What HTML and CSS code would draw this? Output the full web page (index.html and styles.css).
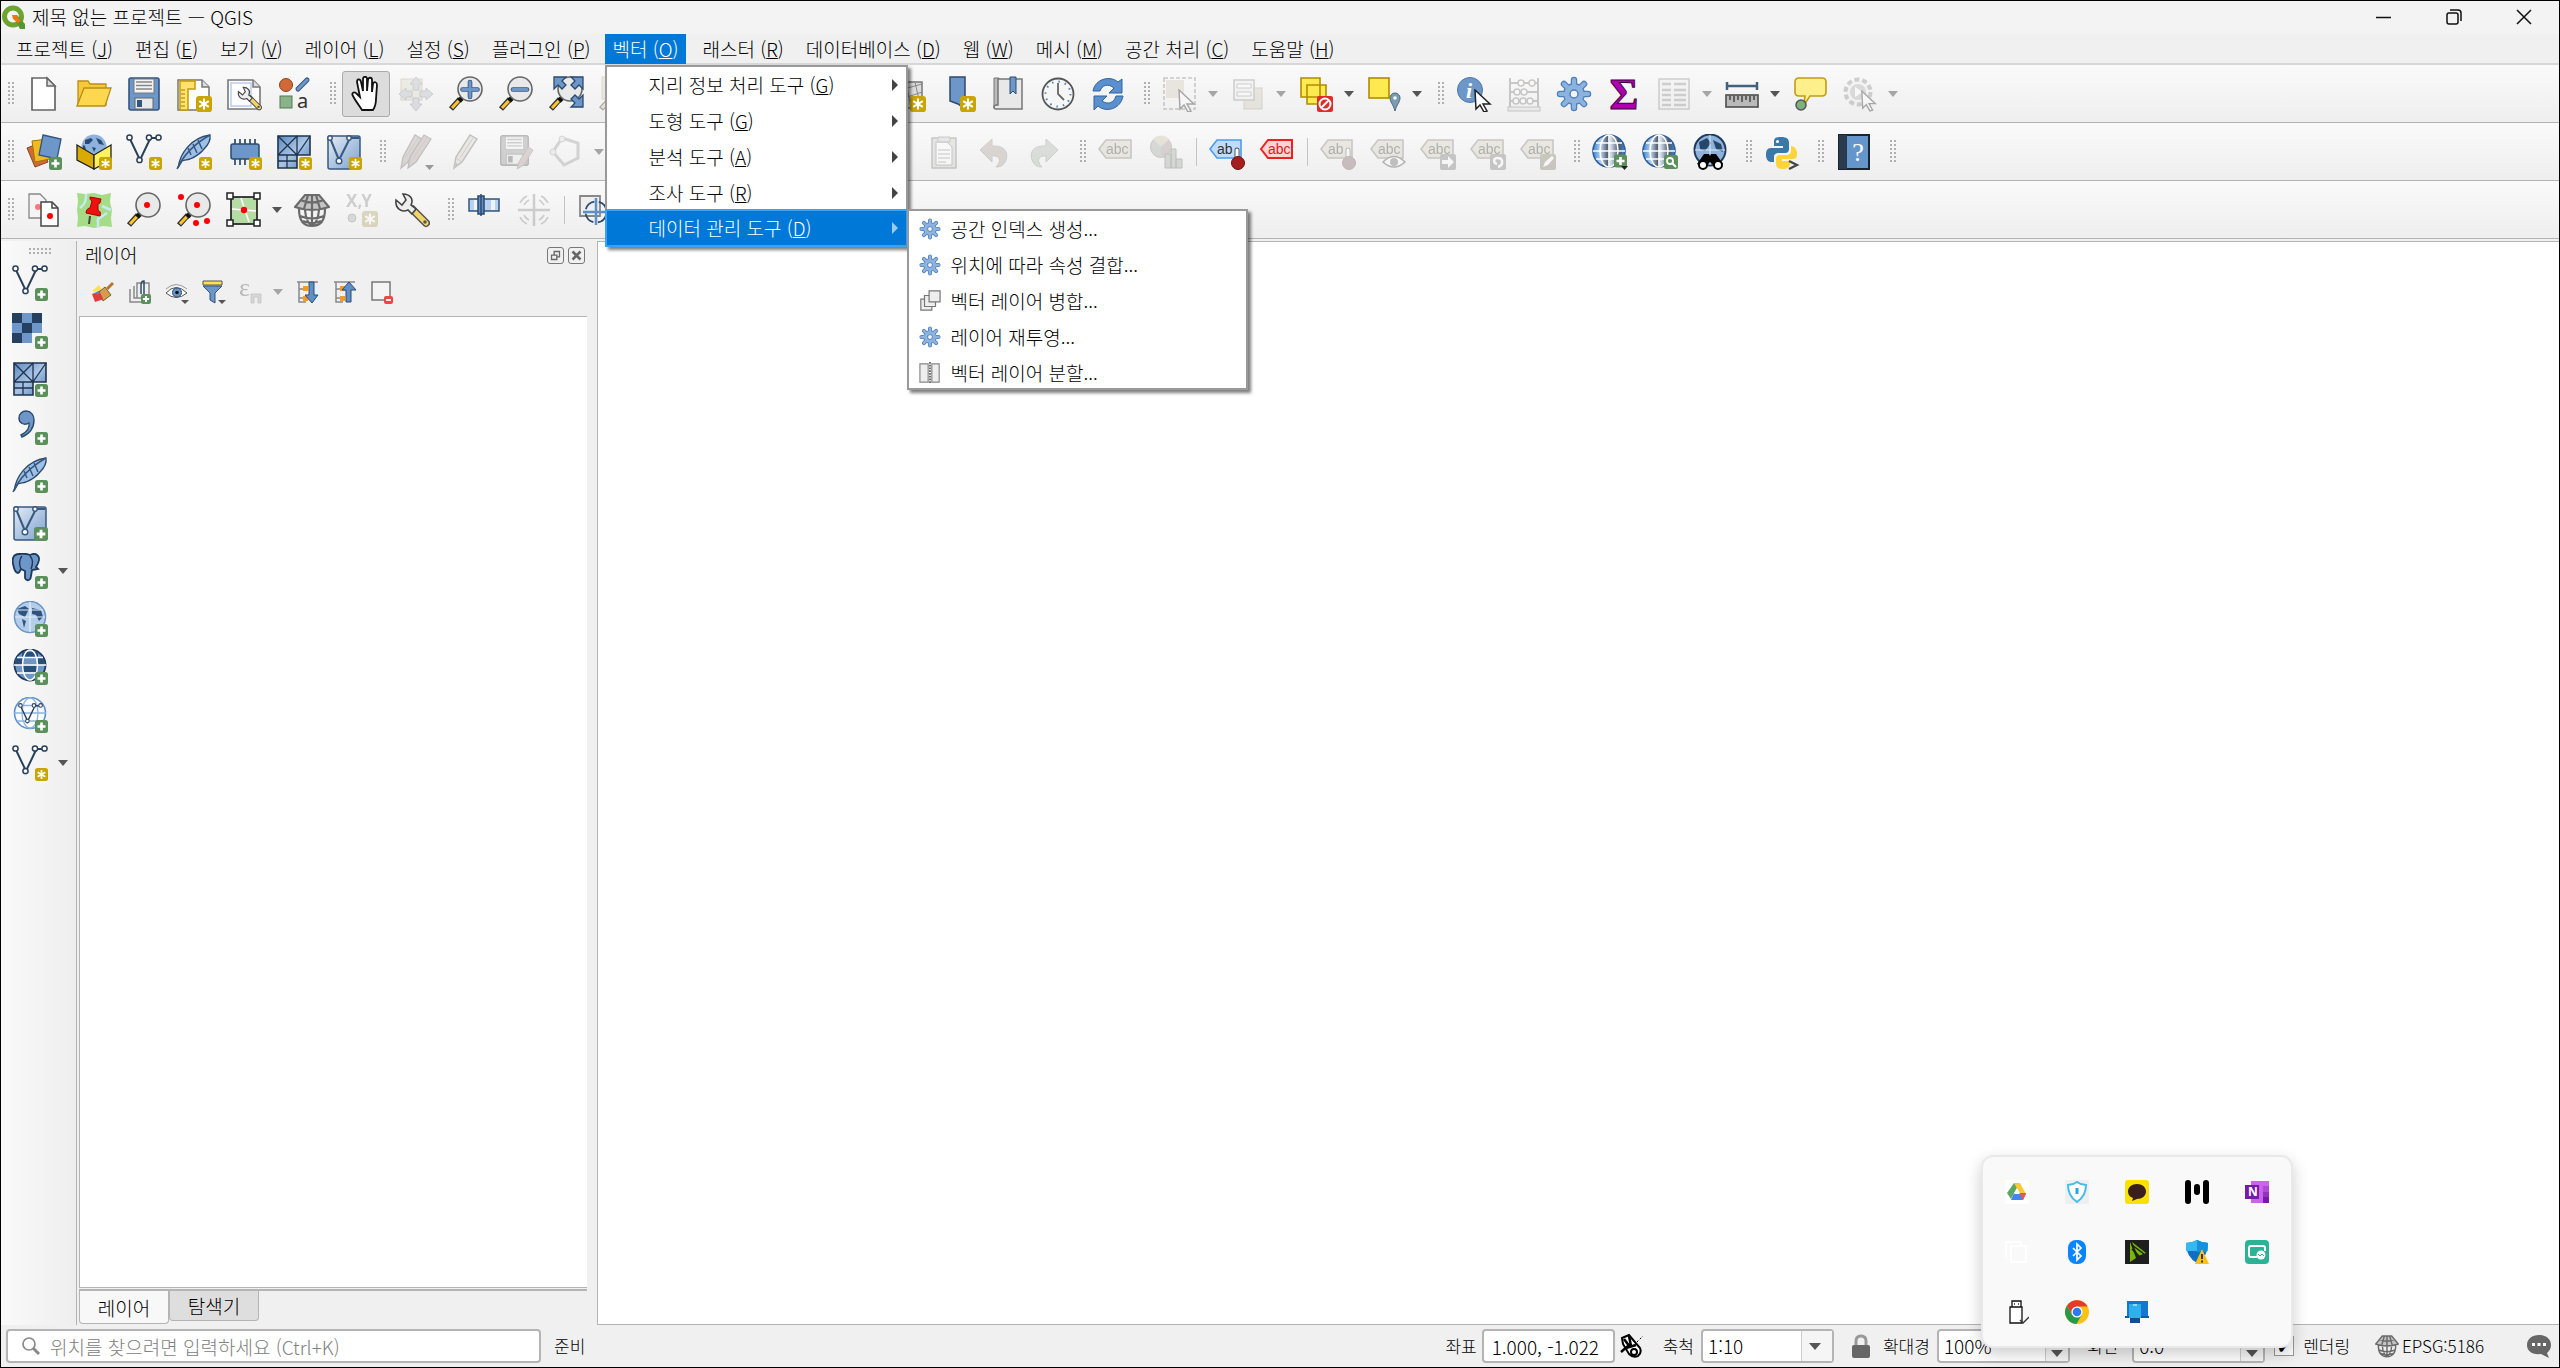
FILE: index.html
```html
<!DOCTYPE html>
<html lang="ko">

<head>
  <meta charset="UTF-8" />
  <meta name="viewport" content="width=device-width, initial-scale=1" />
  <title>제목 없는 프로젝트 — QGIS</title>
  <link rel="stylesheet" href="styles.css">
</head>

<body>

  <!-- gradients stay rendered, otherwise fills that use them go blank -->
  <svg class="gradients" aria-hidden="true">
    <defs>
      <linearGradient id="gBlue" x1="0" y1="0" x2="1" y2="1">
        <stop offset="0" stop-color="#e4ecf5" />
        <stop offset="1" stop-color="#7ba0cd" />
      </linearGradient>
      <linearGradient id="gMesh" x1="0" y1="0" x2="1" y2="1">
        <stop offset="0" stop-color="#5c88bd" />
        <stop offset=".5" stop-color="#a9c5e6" />
        <stop offset="1" stop-color="#4f7db5" />
      </linearGradient>
      <linearGradient id="gGlobe" x1="0" y1="0" x2="1" y2="0">
        <stop offset="0" stop-color="#3f86d2" />
        <stop offset=".25" stop-color="#b9d3ee" />
        <stop offset=".45" stop-color="#555f6b" />
        <stop offset=".55" stop-color="#d5e2f0" />
        <stop offset=".8" stop-color="#4d5966" />
        <stop offset="1" stop-color="#3f86d2" />
      </linearGradient>
    </defs>
  </svg>

  <!-- icon set -->
  <svg class="icon-defs" aria-hidden="true">
    <symbol id="plus" viewBox="0 0 13 13">
      <rect width="13" height="13" rx="2.500" fill="#5b8f5b" />
      <path d="M6.500 2.500v8M2.500 6.500h8" stroke="#fff" stroke-width="2.600" />
    </symbol>
    <symbol id="star" viewBox="0 0 13 13">
      <rect width="13" height="13" rx="2.500" fill="#c8a500" />
      <path d="M6.500 2v9M2.600 4.200l7.800 4.600M10.400 4.200L2.600 8.800" stroke="#fff" stroke-width="1.700" />
    </symbol>
    <symbol id="gear" viewBox="0 0 36 36">
      <g stroke="#4d80bd" stroke-width="6.500" stroke-linecap="round">
        <path d="M18 4v28M4 18h28M8 8l20 20M28 8L8 28" />
      </g>
      <circle cx="18" cy="18" r="11" fill="#4d80bd" />
      <g stroke="#8db2de" stroke-width="4" stroke-linecap="round">
        <path d="M18 4v28M4 18h28M8 8l20 20M28 8L8 28" />
      </g>
      <circle cx="18" cy="18" r="9.800" fill="#8db2de" />
      <circle cx="18" cy="18" r="4" fill="#f4f4f4" stroke="#4d80bd" stroke-width="1.500" />
    </symbol>
    <symbol id="lens" viewBox="0 0 36 36">
      <path d="M3 33L12 23" stroke="#333" stroke-width="5.500" />
      <path d="M4 32L11 24.500" stroke="#fdc52c" stroke-width="3" />
      <path d="M11 25l3-3" stroke="#111" stroke-width="5" />
      <circle cx="22" cy="13" r="12" fill="#e9e9e9" stroke="#666" stroke-width="1.600" />
    </symbol>
    <symbol id="veclines" viewBox="0 0 36 36">
      <path d="M4 5L14 26L24 5M24 4h9" fill="none" stroke="#2a4058" stroke-width="2" />
      <g fill="#fff" stroke="#2a4058" stroke-width="1.500">
        <circle cx="3.500" cy="3.500" r="2.600" />
        <circle cx="23" cy="3.500" r="2.600" />
        <circle cx="32.500" cy="3.500" r="2.600" />
        <circle cx="13.500" cy="26" r="2.600" />
      </g>
    </symbol>
    <symbol id="feather" viewBox="0 0 36 36">
      <path d="M2 34C4 20 14 4 34 1c1 6-2 10-6 14-4 5-9 8-14 10-4 1-6 1-8 2z" fill="#9fc0e6" stroke="#2c4a6e" stroke-width="1.300" />
      <path d="M1 35C7 22 18 10 34 1M12 14l3 7M17 10l4 9M22 6l4 9" fill="none" stroke="#35577f" stroke-width="1.500" />
    </symbol>
    <symbol id="mesh" viewBox="0 0 36 36">
      <path d="M2 2h32v19H21v13H2z" fill="url(#gMesh)" stroke="#20334d" stroke-width="1.600" />
      <path d="M2 21h19V2M2 2l19 19M21 2L2 21M34 2L21 21M11 21v13M2 27h19" fill="none" stroke="#20334d" stroke-width="1.300" />
    </symbol>
    <symbol id="vectile" viewBox="0 0 36 36">
      <rect x="2" y="2" width="32" height="33" rx="2" fill="url(#gBlue)" stroke="#37587f" stroke-width="1.500" />
      <path d="M4 4L13 26L24 4h9" fill="none" stroke="#37587f" stroke-width="2" />
      <g fill="#fff" stroke="#37587f" stroke-width="1.400">
        <circle cx="4" cy="4" r="2.200" />
        <circle cx="23" cy="4" r="2.200" />
        <circle cx="13" cy="27" r="2.800" />
      </g>
    </symbol>
    <symbol id="page" viewBox="0 0 36 36">
      <path d="M6 2h15l8 8v24H6z" fill="#fff" stroke="#666" stroke-width="1.700" />
      <path d="M21 2v8h8z" fill="#ddd" stroke="#666" stroke-width="1.500" />
    </symbol>
    <symbol id="folder" viewBox="0 0 36 36">
      <path d="M2 29V5h10l2 3h16v21z" fill="#f8c936" stroke="#b98e17" stroke-width="1.300" />
      <path d="M1 30L8 12h27l-6 18z" fill="#fdd84e" stroke="#b98e17" stroke-width="1.300" />
    </symbol>
    <symbol id="save" viewBox="0 0 36 36">
      <path d="M3 4q0-2 2-2h26q2 0 2 2v28q0 2-2 2H5q-2 0-2-2z" fill="#6c97c8" stroke="#33557e" stroke-width="1.600" />
      <rect x="8" y="3" width="20" height="14" fill="#f3f3f3" stroke="#777" />
      <path d="M10 6h16M10 9.500h16M10 13h16" stroke="#888" stroke-width="1.500" />
      <rect x="9" y="22" width="18" height="11" fill="#e9e9e9" stroke="#666" />
      <rect x="11" y="24" width="5" height="7" fill="#33557e" />
    </symbol>
    <symbol id="layout" viewBox="0 0 36 36">
      <path d="M2 4h24l7 7v23H2z" fill="#fff" stroke="#777" stroke-width="1.500" />
      <path d="M4 5h15v8h-7v21H4z" fill="#ffe36c" stroke="#c29b0c" stroke-width="1.500" />
      <path d="M5 14h4M5 18h4M5 22h4M5 26h4M5 30h4" stroke="#9b7c08" />
      <path d="M26 4v7h7" fill="#ddd" stroke="#777" stroke-width="1.500" />
      <use href="#star" x="20" y="20" width="16" height="16" />
    </symbol>
    <symbol id="wrench" viewBox="0 0 36 36">
      <path d="M18 17l14 14" stroke="#555" stroke-width="8" stroke-linecap="round" />
      <path d="M20 19l12 12" stroke="#f3d567" stroke-width="5" stroke-linecap="round" />
      <path d="M2 8c-1 8 5 13 12 10l4 4 4-5-5-4c3-6-1-11-8-11l3 6-4 5z" fill="#eee" stroke="#444" stroke-width="1.600" />
      <circle cx="31" cy="30" r="1.700" fill="#555" />
    </symbol>
    <symbol id="layouts" viewBox="0 0 36 36">
      <path d="M2 4h25l7 7v22H2z" fill="#fff" stroke="#777" stroke-width="1.600" />
      <path d="M5 7h20v23H5z" fill="none" stroke="#b9cbee" stroke-width="1.500" />
      <path d="M27 4v7h7" fill="#ddd" stroke="#777" stroke-width="1.500" />
      <use href="#wrench" x="11" y="9" width="25" height="27" />
    </symbol>
    <symbol id="styles" viewBox="0 0 36 36">
      <circle cx="10" cy="9" r="6.500" fill="#d06936" stroke="#8d4320" />
      <path d="M22 13L31 4" stroke="#33557e" stroke-width="5" stroke-linecap="round" />
      <path d="M22 13L31 4" stroke="#6c97c8" stroke-width="3" stroke-linecap="round" />
      <rect x="4" y="20" width="12" height="12" fill="#8bb28b" stroke="#4d7d4d" />
      <text x="21" y="32" class="glyph-a">a</text>
    </symbol>
    <symbol id="hand" viewBox="0 0 36 36">
      <path d="M14 34C10 28 7 24 5 20c-2-3 1-5 4-2l3 3L9 6c0-3 3-4 4 0l2 9V3c0-3 4-3 4 0v12l1-11c0-3 4-3 4 0v12l1-8c1-3 4-2 4 1l-1 14c0 5-1 8-3 11z" fill="#fff" stroke="#111" stroke-width="1.800" />
    </symbol>
    <symbol id="pansel" viewBox="0 0 36 36">
      <rect x="3" y="3" width="21" height="21" fill="#e3d9a0" stroke="#b5a44d" />
      <path d="M18 1l6 7h-3v6h-6V8h-3zM18 35l6-7h-3v-6h-6v6h-3zM1 18l7-6v3h6v6H8v3zM35 18l-7-6v3h-6v6h6v3z" fill="#a9b8cc" stroke="#77879b" />
    </symbol>
    <symbol id="zoomin" viewBox="0 0 36 36">
      <use href="#lens" />
      <path d="M22 6v15M14.500 13.500h15" stroke="#33557e" stroke-width="4.600" stroke-linecap="round" />
      <path d="M22 6v15M14.500 13.500h15" stroke="#6c97c8" stroke-width="3" stroke-linecap="round" />
    </symbol>
    <symbol id="zoomout" viewBox="0 0 36 36">
      <use href="#lens" />
      <path d="M15 13.500h14" stroke="#33557e" stroke-width="4.600" stroke-linecap="round" />
      <path d="M15 13.500h14" stroke="#6c97c8" stroke-width="3" stroke-linecap="round" />
    </symbol>
    <symbol id="zoomfull" viewBox="0 0 36 36">
      <use href="#lens" />
      <g fill="#6c97c8" stroke="#2c4a6e" stroke-width="1.300">
        <path d="M6 1h12l-4 4 4 4-4 4-4-4-4 4z" />
        <path d="M35 1H23l4 4-4 4 4 4 4-4 4 4z" />
        <path d="M35 31V19l-4 4-4-4-4 4 4 4-4 4z" />
      </g>
    </symbol>
    <symbol id="zoomsel" viewBox="0 0 36 36">
      <rect x="4" y="1" width="22" height="22" fill="#ded394" stroke="#b5a44d" />
      <use href="#lens" />
    </symbol>
    <symbol id="view3d" viewBox="0 0 36 36">
      <path d="M3 6h29v26H3z" fill="#ddd" stroke="#777" stroke-width="1.500" />
      <path d="M3 16l29-8M3 26l29-10M16 6l5 26M25 6l4 18" fill="none" stroke="#888" />
      <use href="#star" x="20" y="20" width="16" height="16" />
    </symbol>
    <symbol id="bookmarknew" viewBox="0 0 36 36">
      <path d="M10 1h15v32l-7-5-8-3z" fill="#6c97c8" stroke="#2c4a6e" stroke-width="1.500" />
      <use href="#star" x="20" y="20" width="16" height="16" />
    </symbol>
    <symbol id="bookmarks" viewBox="0 0 36 36">
      <path d="M4 2h5v27H6q-2 1-2 3z" fill="#bbb" stroke="#777" />
      <path d="M8 3h24v30H6q-2 0-2-2t3-2h1z" fill="#e8e8e8" stroke="#777" stroke-width="1.500" />
      <path d="M20 1h6v17l-3-3-3 3z" fill="#6c97c8" stroke="#2c4a6e" />
    </symbol>
    <symbol id="clock" viewBox="0 0 36 36">
      <circle cx="18" cy="18" r="15.500" fill="#f6f6f6" stroke="#555" stroke-width="1.800" />
      <circle cx="18" cy="18" r="12.500" fill="none" stroke="#4d80bd" stroke-width="2" stroke-dasharray="1.500 5.050" />
      <path d="M18 7v11l6 6" fill="none" stroke="#666" stroke-width="1.800" />
    </symbol>
    <symbol id="refresh" viewBox="0 0 36 36">
      <path d="M3 15C5 3 20-1 28 6l4-3v14H19l5-5c-6-5-12-3-14 3z" fill="#5b90cf" stroke="#31629c" />
      <path d="M33 20C31 33 16 37 8 30l-4 4V20h13l-5 5c6 4 12 2 14-5z" fill="#5b90cf" stroke="#31629c" />
    </symbol>
    <symbol id="cursor" viewBox="0 0 20 24">
      <path d="M2 1l15 14-7 0 4 7-3 1-4-7-4 4z" fill="#fff" stroke="#222" stroke-width="1.500" />
    </symbol>
    <symbol id="select" viewBox="0 0 36 36">
      <rect x="2" y="2" width="31" height="31" fill="none" stroke="#777" stroke-width="1.600" stroke-dasharray="4 2" />
      <rect x="4" y="4" width="18" height="18" fill="#d8ca91" />
      <use href="#cursor" x="15" y="13" width="20" height="24" />
    </symbol>
    <symbol id="selform" viewBox="0 0 36 36">
      <rect x="14" y="12" width="18" height="21" fill="#d8ca91" stroke="#999" />
      <rect x="4" y="4" width="20" height="20" fill="#eee" stroke="#888" stroke-width="1.500" />
      <path d="M7 8h14v4H7zM7 16h14v4H7z" fill="#fff" stroke="#888" />
    </symbol>
    <symbol id="deselect" viewBox="0 0 36 36">
      <path d="M3 2h19v19H3zM9 9h19v19H9z" fill="#fdea50" stroke="#b08d00" stroke-width="1.600" />
      <rect x="19" y="20" width="16" height="16" rx="2" fill="#e02b2b" />
      <circle cx="27" cy="28" r="5.500" fill="none" stroke="#fff" stroke-width="2" />
      <path d="M23 32l8-8" stroke="#fff" stroke-width="2" />
    </symbol>
    <symbol id="selloc" viewBox="0 0 36 36">
      <rect x="3" y="2" width="20" height="20" fill="#fdea50" stroke="#b08d00" stroke-width="1.600" />
      <path d="M29 35C27 28 24 26 24 22a5 5 0 0 1 10 0c0 4-3 6-5 13z" fill="#7b9bb3" stroke="#49697f" />
      <circle cx="29" cy="22" r="1.800" fill="#fff" />
    </symbol>
    <symbol id="identify" viewBox="0 0 36 36">
      <circle cx="14" cy="14" r="12.500" fill="#6c97c8" stroke="#4a76ab" />
      <text x="10" y="22" class="glyph-i">i</text>
      <use href="#cursor" x="17" y="13" width="20" height="24" />
    </symbol>
    <symbol id="abacus" viewBox="0 0 36 36">
      <path d="M4 2v30M32 2v30M4 7h28M4 16h28M4 25h28" fill="none" stroke="#777" stroke-width="2" />
      <g fill="#fff" stroke="#777" stroke-width="1.500">
        <circle cx="15" cy="7" r="3" stroke="#a66" />
        <circle cx="26" cy="7" r="3" stroke="#a66" />
        <circle cx="11" cy="16" r="3" />
        <circle cx="18" cy="16" r="3" />
        <circle cx="10" cy="25" r="3" />
        <circle cx="17" cy="25" r="3" />
        <circle cx="24" cy="25" r="3" />
      </g>
      <rect x="2" y="31" width="32" height="4" fill="#ddd" stroke="#777" />
    </symbol>
    <symbol id="sigma" viewBox="0 0 36 36">
      <text x="18" y="33" class="glyph-sigma">Σ</text>
    </symbol>
    <symbol id="attrs" viewBox="0 0 36 36">
      <rect x="3" y="3" width="30" height="30" fill="#eee" stroke="#888" stroke-width="1.500" />
      <path d="M6 8h9M18 8h12M6 14h9M18 14h12M6 19h9M18 19h12M6 24h9M18 24h12M6 29h9M18 29h12" stroke="#888" stroke-width="2.500" />
    </symbol>
    <symbol id="ruler" viewBox="0 0 36 36">
      <path d="M3 6v8M33 6v8M3 10h30" stroke="#45607f" stroke-width="2.500" fill="none" />
      <rect x="2" y="19" width="32" height="12" fill="#b9b9b9" stroke="#555" stroke-width="1.700" />
      <path d="M6 20v4M10 20v6M14 20v4M18 20v6M22 20v4M26 20v6M30 20v4" stroke="#333" stroke-width="1.300" />
    </symbol>
    <symbol id="tip" viewBox="0 0 36 36">
      <path d="M7 2h23q4 0 4 4v10q0 4-4 4H18l-6 9 1-9H7q-4 0-4-4V6q0-4 4-4z" fill="#fdf08c" stroke="#c39c14" stroke-width="1.600" />
      <circle cx="9" cy="29" r="5" fill="#7fb07f" stroke="#555" stroke-width="1.500" />
    </symbol>
    <symbol id="action" viewBox="0 0 36 36">
      <circle cx="16" cy="16" r="12.500" fill="#eee" stroke="#888" stroke-width="4" stroke-dasharray="5 2.850" />
      <circle cx="16" cy="16" r="8" fill="#aaa" />
      <path d="M13 11l8 5-8 5z" fill="#fff" />
      <use href="#cursor" x="18" y="14" width="18" height="22" />
    </symbol>

    <symbol id="datasource" viewBox="0 0 36 36">
      <path d="M1 14l13-5 8 19-13 5z" fill="#d06936" stroke="#8d4320" />
      <path d="M6 7l15-2 3 20-15 3z" fill="#eebb22" stroke="#a07700" />
      <path d="M17 1l18 4-4 20-18-4z" fill="#6c97c8" stroke="#33557e" stroke-width="1.300" />
      <use href="#plus" x="23" y="23" width="13" height="13" />
    </symbol>
    <symbol id="geopackage" viewBox="0 0 36 36">
      <circle cx="18" cy="13" r="12.500" fill="#8db2de" />
      <path d="M9 6l6-2 2 2-4 4-4 0zM20 4l5 2 3 5-5-1zM16 13l4 1-2 4zM7 11l2 1 1 4-3-2z" fill="#2a4a72" />
      <path d="M1 11l17 10v14L1 26z" fill="#d9aa00" stroke="#222" stroke-width="1.300" />
      <path d="M35 11L18 21v14l17-9z" fill="#fff060" stroke="#222" stroke-width="1.300" />
      <use href="#star" x="23" y="23" width="13" height="13" />
    </symbol>
    <symbol id="newshape" viewBox="0 0 36 36">
      <use href="#veclines" />
      <use href="#star" x="23" y="23" width="13" height="13" />
    </symbol>
    <symbol id="newspatialite" viewBox="0 0 36 36">
      <use href="#feather" />
      <use href="#star" x="23" y="23" width="13" height="13" />
    </symbol>
    <symbol id="newmem" viewBox="0 0 36 36">
      <path d="M9 5v26M14 5v26M19 5v26M24 5v26M29 5v26" stroke="#2c4a6e" stroke-width="1.700" />
      <rect x="5" y="10" width="28" height="15" rx="2" fill="#6c97c8" stroke="#2c4a6e" stroke-width="1.500" />
      <use href="#star" x="23" y="23" width="13" height="13" />
    </symbol>
    <symbol id="newmesh" viewBox="0 0 36 36">
      <use href="#mesh" />
      <use href="#star" x="23" y="23" width="13" height="13" />
    </symbol>
    <symbol id="newgpx" viewBox="0 0 36 36">
      <use href="#vectile" />
      <use href="#star" x="23" y="23" width="13" height="13" />
    </symbol>
    <symbol id="pencil" viewBox="0 0 36 36">
      <path d="M6 34l2-11L22 1l7 4L14 28z" fill="#d8d0b4" stroke="#666" stroke-width="1.400" />
      <path d="M8 24l6 4M12 24L25 4M6 34l2-5 2 2z" fill="#666" stroke="#888" />
    </symbol>
    <symbol id="edits" viewBox="0 0 36 36">
      <path d="M3 34l2-11L17 1l7 4L10 28z" fill="#c49a90" stroke="#666" stroke-width="1.300" />
      <path d="M10 34l2-11L26 1l7 4L18 28z" fill="#c8958a" stroke="#666" stroke-width="1.300" />
      <path d="M15 24L29 4M7 24L20 4" stroke="#888" />
      <path d="M27 31h9l-4.500 5z" fill="#000" />
    </symbol>
    <symbol id="saveedits" viewBox="0 0 36 36">
      <g class="mono">
        <use href="#save" width="33" height="33" />
      </g>
      <path d="M19 35l2-7 9-15 5 3-9 15z" fill="#c8958a" stroke="#777" />
    </symbol>
    <symbol id="polygon" viewBox="0 0 36 36">
      <path d="M14 4l16 5v15l-14 7-11-13z" fill="none" stroke="#999" stroke-width="3" />
      <circle cx="14" cy="5" r="3" fill="#ddd" stroke="#999" />
      <circle cx="5" cy="18" r="3" fill="#ddd" stroke="#999" />
    </symbol>
    <symbol id="paste" viewBox="0 0 36 36">
      <rect x="6" y="4" width="24" height="30" fill="#d5c8ae" stroke="#777" stroke-width="1.500" />
      <path d="M10 8h11l5 5v18H10z" fill="#fff" stroke="#777" />
      <path d="M12 3h12v5H12z" fill="#ccc" stroke="#777" />
      <path d="M12 16h12M12 20h12M12 24h12M12 28h8" stroke="#777" />
    </symbol>
    <symbol id="undo" viewBox="0 0 36 36">
      <path d="M4 16L16 5v7c12-1 17 6 14 14-2 5-5 7-10 7 6-6 4-12-4-11v6z" fill="#c49a80" stroke="#888" />
    </symbol>
    <symbol id="redo" viewBox="0 0 36 36">
      <path d="M32 16L20 5v7C8 11 3 18 6 26c2 5 5 7 10 7-6-6-4-12 4-11v6z" fill="#a9b8a9" stroke="#888" />
    </symbol>
    <symbol id="tag" viewBox="0 0 36 36">
      <path d="M1 15L8 6h25v18H8z" fill="#dccf95" stroke="#777" stroke-width="1.600" />
      <text x="8" y="20" class="glyph-tag">abc</text>
    </symbol>
    <symbol id="diagram" viewBox="0 0 36 36">
      <circle cx="13" cy="13" r="10.500" fill="#99a999" stroke="#777" />
      <path d="M13 13L5 5a11 11 0 0 1 16 0z" fill="#d3c477" />
      <path d="M13 13v11a11 11 0 0 0 8-18z" fill="#bb8a8a" />
      <path d="M17 20h6v14h-6zM23 15h5v19h-5zM28 25h6v9h-6z" fill="#9aab9a" stroke="#666" />
    </symbol>
    <symbol id="tagpin" viewBox="0 0 36 36">
      <path d="M1 15L8 6h24v18H8z" fill="#bfdcfb" stroke="#4a9df0" stroke-width="1.600" />
      <text x="8" y="20" class="glyph-tag">ab</text>
      <path d="M28 16v10" stroke="#555" stroke-width="5" stroke-linecap="round" />
      <path d="M28 16v10" stroke="#fff" stroke-width="3" stroke-linecap="round" />
      <circle cx="29" cy="29" r="6.500" fill="#a51f1f" stroke="#701010" />
    </symbol>
    <symbol id="tagpinoff" viewBox="0 0 36 36">
      <path d="M1 15L8 6h24v18H8z" fill="#dccf95" stroke="#777" stroke-width="1.600" />
      <text x="8" y="20" class="glyph-tag">ab</text>
      <path d="M28 16v10" stroke="#555" stroke-width="5" stroke-linecap="round" />
      <path d="M28 16v10" stroke="#fff" stroke-width="3" stroke-linecap="round" />
      <circle cx="29" cy="29" r="6.500" fill="#a55" stroke="#744" />
    </symbol>
    <symbol id="tagred" viewBox="0 0 36 36">
      <path d="M2 15L9 6h24v18H9z" fill="#fdd5d5" stroke="#f02020" stroke-width="2" />
      <text x="9" y="20" class="glyph-tag red">abc</text>
    </symbol>
    <symbol id="tageye" viewBox="0 0 36 36">
      <use href="#tag" />
      <path d="M13 28q11-11 22 0-11 10-22 0z" fill="#fff" stroke="#444" stroke-width="1.500" />
      <circle cx="24" cy="28" r="4" fill="#666" />
    </symbol>
    <symbol id="tagmove" viewBox="0 0 36 36">
      <use href="#tag" />
      <rect x="20" y="20" width="16" height="16" rx="2" fill="#777" />
      <path d="M22 26h6v-4l6 6-6 6v-4h-6z" fill="#fff" />
    </symbol>
    <symbol id="tagrot" viewBox="0 0 36 36">
      <use href="#tag" />
      <rect x="20" y="20" width="16" height="16" rx="2" fill="#777" />
      <path d="M28 33c6-2 5-9 0-9s-5 5-1 6" fill="none" stroke="#fff" stroke-width="2.500" />
    </symbol>
    <symbol id="tagedit" viewBox="0 0 36 36">
      <use href="#tag" />
      <rect x="20" y="20" width="16" height="16" rx="2" fill="#887b40" />
      <path d="M23 33l2-5 7-6 2 2-6 7z" fill="#fff" />
    </symbol>
    <symbol id="globe" viewBox="0 0 36 36">
      <circle cx="17" cy="17" r="16" fill="url(#gGlobe)" stroke="#2f5f9c" stroke-width="1.600" />
      <path d="M1 17h32M4 9h26M4 25h26M17 1v32" fill="none" stroke="#fff" stroke-width="1.500" />
      <ellipse cx="17" cy="17" rx="9" ry="16" fill="none" stroke="#fff" stroke-width="1.500" />
    </symbol>
    <symbol id="globeadd" viewBox="0 0 36 36">
      <use href="#globe" />
      <use href="#plus" x="22" y="20" width="13" height="14" />
      <path d="M29 32h7l-3.500 4z" fill="#222" />
    </symbol>
    <symbol id="globefind" viewBox="0 0 36 36">
      <use href="#globe" />
      <rect x="22" y="21" width="14" height="14" rx="2" fill="#5b8f5b" />
      <circle cx="28" cy="27" r="3" fill="none" stroke="#fff" stroke-width="1.800" />
      <path d="M30 29l4 4" stroke="#fff" stroke-width="2" />
    </symbol>
    <symbol id="metasearch" viewBox="0 0 36 36">
      <circle cx="18" cy="16" r="15.500" fill="#8fb2da" stroke="#1f3c60" stroke-width="2" />
      <path d="M7 8l8-4 4 5-6 8-5-2zM21 6l8 4 2 8-7-3z" fill="#27466c" />
      <path d="M3 16h30M18 1v30" stroke="#dce9f7" />
      <path d="M12 20h5l1 2 1-2h5l7 10-7 4-6-6-6 6-7-4z" fill="#000" />
      <circle cx="11" cy="31" r="4" fill="#fff" stroke="#000" stroke-width="2" />
      <circle cx="26" cy="31" r="4" fill="#fff" stroke="#000" stroke-width="2" />
    </symbol>
    <symbol id="python" viewBox="0 0 36 36">
      <path d="M17 3c-7 0-7 2-7 6v3h9v2H7c-4 0-5 3-5 7s2 7 5 7h3v-5c0-3 2-4 5-4h6c3 0 4-2 4-4V9c0-4-2-6-8-6z" fill="#3a78aa" />
      <path d="M27 12v5c0 3-2 4-5 4h-6c-3 0-4 2-4 4v5c0 4 3 5 7 5s7-2 7-5v-3h-8v-2h11c4 0 4-3 4-6s-2-7-6-7z" fill="#ffd43b" />
      <circle cx="13.500" cy="7.500" r="1.500" fill="#fff" />
      <path d="M25 27l8 4-8 4" fill="none" stroke="#444" stroke-width="2.200" />
    </symbol>
    <symbol id="help" viewBox="0 0 36 36">
      <rect x="3" y="1" width="30" height="34" fill="#6496cc" stroke="#1a2430" stroke-width="2" />
      <rect x="3" y="1" width="8" height="34" fill="#2a3b4d" />
      <text x="22" y="27" class="glyph-help">?</text>
    </symbol>

    <symbol id="copyfeat" viewBox="0 0 36 36">
      <path d="M3 2h11l6 6v18H3z" fill="#f4f4f4" stroke="#888" stroke-width="1.300" />
      <circle cx="12" cy="15" r="3" fill="#f77" />
      <path d="M15 10h11l6 6v18H15z" fill="#fff" stroke="#444" stroke-width="1.500" />
      <path d="M26 10v6h6" fill="none" stroke="#444" stroke-width="1.500" />
      <circle cx="24" cy="24" r="3" fill="#f00" />
    </symbol>
    <symbol id="pinmap" viewBox="0 0 36 36">
      <path d="M1 1l8 1 9-1 8 2 9-2-1 9 2 8-1 8 1 9-9-1-9 2-9-2-8 1 1-9-1-8 1-9z" fill="#a5dd87" />
      <path d="M10 2q1 9-6 14M35 18l-9-4M22 36v-9l9-6" stroke="#c6e8f7" stroke-width="2.500" fill="none" />
      <path d="M14 24l-1 8" stroke="#444" stroke-width="2" />
      <path d="M14 5l11 2-1 4-2 1v6c3 2 3 4 2 6l-14-3c0-3 2-5 4-5l2-7c-2-1-2-2-2-4z" fill="#f01010" stroke="#a00" />
    </symbol>
    <symbol id="lensdot" viewBox="0 0 36 36">
      <use href="#lens" />
      <circle cx="21" cy="13" r="3" fill="#f00" />
    </symbol>
    <symbol id="lensdots" viewBox="0 0 36 36">
      <use href="#lens" />
      <g fill="#f00">
        <circle cx="21" cy="13" r="3" />
        <circle cx="5" cy="5" r="3" />
        <circle cx="20" cy="31" r="3" />
        <circle cx="31" cy="29" r="3" />
      </g>
    </symbol>
    <symbol id="extent" viewBox="0 0 36 36">
      <rect x="5" y="5" width="26" height="27" fill="#b5dca5" stroke="#222" stroke-width="1.700" />
      <path d="M6 17l24 2M15 6l8 24" stroke="#fff" stroke-width="1.500" />
      <circle cx="18" cy="18" r="3.200" fill="#f00" />
      <path d="M1 1h6v6H1zM28 1h6v6h-6zM1 28h6v6H1zM28 28h6v6h-6z" fill="#fff" stroke="#222" stroke-width="1.500" />
    </symbol>
    <symbol id="crs" viewBox="0 0 36 36">
      <path d="M11 3h14l10 12q-17 6-34 0z" fill="#c4c4c4" />
      <path d="M11 3h14l10 12q-17 6-34 0zM6 8q12 5 24 0M14 3l-4 14M22 3l4 14M18 3v31M5 17q0 17 13 17t13-17M11 18q1 12 7 16M25 18q-1 12-7 16M6 24q12 5 24 0M9 29q9 4 18 0" fill="none" stroke="#6b6b6b" stroke-width="2.200" />
    </symbol>
    <symbol id="xy" viewBox="0 0 36 36">
      <text x="2" y="15" class="glyph-xy">X,Y</text>
      <circle cx="8" cy="26" r="4" fill="#aaa" stroke="#777" />
      <use href="#star" x="18" y="19" width="16" height="16" />
    </symbol>
    <symbol id="clipper" viewBox="0 0 36 36">
      <path d="M3 7h30v12H3z" fill="#b9d2f0" stroke="#33557e" stroke-width="1.500" />
      <path d="M8 8h4v10H8zM25 8h4v10h-4z" fill="#eef4fb" />
      <path d="M12 4h6v18h-6z" fill="#5f8fc6" stroke="#2c4a6e" stroke-width="1.500" />
      <path d="M15 2v22" stroke="#2c4a6e" stroke-width="1.500" />
    </symbol>
    <symbol id="cross" viewBox="0 0 36 36">
      <path d="M18 2v32M2 18h32" stroke="#888" stroke-width="2.500" />
      <path d="M8 13a11 11 0 0 1 5-5M23 8a11 11 0 0 1 5 5M28 23a11 11 0 0 1-5 5M13 28a11 11 0 0 1-5-5M4 11a15 15 0 0 1 7-7M25 4a15 15 0 0 1 7 7M32 25a15 15 0 0 1-7 7M11 32a15 15 0 0 1-7-7" fill="none" stroke="#888" stroke-width="1.700" />
    </symbol>
    <symbol id="target" viewBox="0 0 36 36">
      <path d="M3 4h20v20H3z" fill="#eee" stroke="#888" stroke-width="1.800" />
      <circle cx="19" cy="20" r="10.500" fill="none" stroke="#2c4a6e" stroke-width="1.700" stroke-dasharray="12 4.500" stroke-dashoffset="14" />
      <path d="M19 6v27M6 20h27" stroke="#5f8fc6" stroke-width="2.500" />
    </symbol>

    <symbol id="addvec" viewBox="0 0 36 36">
      <use href="#veclines" />
      <use href="#plus" x="23" y="23" width="13" height="13" />
    </symbol>
    <symbol id="addraster" viewBox="0 0 36 36">
      <path d="M0 0h30v20h-10v10H0z" fill="#6c97c8" />
      <path d="M0 0h10v10H0zM20 0h10v10H20zM10 10h10v10H10zM0 20h10v10H0z" fill="#243f60" />
      <use href="#plus" x="23" y="23" width="13" height="13" />
    </symbol>
    <symbol id="addmesh" viewBox="0 0 36 36">
      <use href="#mesh" />
      <use href="#plus" x="23" y="23" width="13" height="13" />
    </symbol>
    <symbol id="addcsv" viewBox="0 0 36 36">
      <path d="M9 26c6-3 9-7 8-12-5 3-10 0-10-5 0-4 3-7 7-7 5 0 8 4 8 9 0 8-5 14-12 17z" fill="#6c97c8" stroke="#2c4a6e" stroke-width="1.400" />
      <use href="#plus" x="23" y="23" width="13" height="13" />
    </symbol>
    <symbol id="addspatialite" viewBox="0 0 36 36">
      <use href="#feather" />
      <use href="#plus" x="23" y="23" width="13" height="13" />
    </symbol>
    <symbol id="addtile" viewBox="0 0 36 36">
      <use href="#vectile" />
      <use href="#plus" x="22" y="22" width="14" height="14" />
    </symbol>
    <symbol id="addpg" viewBox="0 0 36 36">
      <path d="M7 1C1 1 0 6 1 11s2 9 5 9c2 0 2-3 3-4l4 2v7q1 3 4 2 2-1 2-4l1-6 6-1-2-2c3-5 4-9 2-11-2-3-6-2-8-1-4-2-7-1-11-1z" fill="#6c97c8" stroke="#20395a" stroke-width="1.800" />
      <path d="M10 3c-3 3-3 9-1 13M18 3c3 3 3 8 1 13" fill="none" stroke="#20395a" stroke-width="1.500" />
      <use href="#plus" x="23" y="23" width="13" height="13" />
    </symbol>
    <symbol id="addwms" viewBox="0 0 36 36">
      <circle cx="18" cy="16" r="15.500" fill="#b4cdea" stroke="#6c97c8" stroke-width="1.600" />
      <path d="M5 8l8-3 4 3-4 8-6-3zM20 7l9 2 2 7-4 4-3-6-4-1zM10 18l4 2-2 7z" fill="#2e5580" />
      <path d="M3 16h30M5 9h26M18 1v30" stroke="#e4eefa" stroke-width="1.200" />
      <use href="#plus" x="23" y="23" width="13" height="13" />
    </symbol>
    <symbol id="addwcs" viewBox="0 0 36 36">
      <circle cx="18" cy="16" r="15.500" fill="#6c97c8" stroke="#20395a" stroke-width="1.800" />
      <path d="M10 3h16v5H10zM3 9h8v7H3zM26 9h6v7h-6zM11 17h14v6H11z" fill="#28507c" />
      <path d="M2 16h32M5 8.500h26M5 24h26" stroke="#fff" stroke-width="1.500" />
      <ellipse cx="18" cy="16" rx="7.500" ry="15" fill="none" stroke="#fff" stroke-width="1.500" />
      <use href="#plus" x="23" y="23" width="13" height="13" />
    </symbol>
    <symbol id="addwfs" viewBox="0 0 36 36">
      <circle cx="18" cy="16" r="15.500" fill="#fafcff" stroke="#5b90cf" stroke-width="1.600" />
      <path d="M2 16h32M5 8.500h26M5 24h26" stroke="#8fb4e0" stroke-width="1.300" />
      <ellipse cx="18" cy="16" rx="8" ry="15" fill="none" stroke="#8fb4e0" stroke-width="1.300" />
      <use href="#veclines" x="6" y="6" width="25" height="25" />
      <use href="#plus" x="23" y="23" width="13" height="13" />
    </symbol>

    <!-- layer panel -->
    <symbol id="brush" viewBox="0 0 24 24">
      <path d="M1 11l7-6 5 8z" fill="#ffe14d" />
      <path d="M1 14l9-4 4 6-5 3z" fill="#4c86cf" />
      <path d="M1 14l3 8 9-3-4-5z" fill="#e63b3b" />
      <path d="M8 12l6-5 6 8-8 6q-1-5-4-9z" fill="#d69a55" stroke="#8c5c22" />
      <path d="M16 9l6-6" stroke="#b9782f" stroke-width="3" />
    </symbol>
    <symbol id="addgroup" viewBox="0 0 24 24">
      <path d="M2 9v13h12M6 6v12h11M9 3h12v15H9z" fill="none" stroke="#888" stroke-width="1.500" />
      <path d="M13 14V5q0-4 3-4v13" fill="none" stroke="#2c4a6e" stroke-width="1.500" />
      <use href="#plus" x="13" y="14" width="10" height="10" />
    </symbol>
    <symbol id="eye" viewBox="0 0 24 24">
      <path d="M1 13q10-11 21 0-11 9-21 0z" fill="#fff" stroke="#555" />
      <path d="M1 9q10-9 21 0" fill="none" stroke="#999" />
      <circle cx="12" cy="12.500" r="4.500" fill="#6c97c8" stroke="#2c4a6e" />
      <circle cx="12" cy="12.500" r="1.800" fill="#111" />
      <path d="M16 20h8l-4 4z" fill="#555" />
    </symbol>
    <symbol id="filter" viewBox="0 0 24 24">
      <path d="M1 1h19v4H1z" fill="#ffe14d" stroke="#555" />
      <path d="M1 6h19l-7 7v10l-5-3v-7z" fill="#6c97c8" stroke="#33557e" />
      <path d="M16 20h8l-4 4z" fill="#555" />
    </symbol>
    <symbol id="expr" viewBox="0 0 24 24">
      <text x="0" y="16" class="glyph-eps">ε</text>
      <path d="M12 14h10v9h-3v-6h-4v6h-3z" fill="#aaa" stroke="#888" />
    </symbol>
    <symbol id="expand" viewBox="0 0 24 24">
      <path d="M1 2h21M3 2v20h7M3 9h5M3 18h5" fill="none" stroke="#888" stroke-width="1.500" />
      <path d="M7 6h5v5H7zM7 16h5v5H7z" fill="#f59a23" />
      <path d="M13 2h5v13h4l-6 8-7-8h4z" fill="#5f8fc6" stroke="#2c4a6e" />
    </symbol>
    <symbol id="collapse" viewBox="0 0 24 24">
      <path d="M1 2h21M3 2v20h7M3 9h5M3 18h5" fill="none" stroke="#888" stroke-width="1.500" />
      <path d="M7 6h5v5H7zM7 16h5v5H7z" fill="#f59a23" />
      <path d="M13 22h5V10h5l-7-8-7 8h4z" fill="#5f8fc6" stroke="#2c4a6e" />
    </symbol>
    <symbol id="remove" viewBox="0 0 24 24">
      <rect x="2" y="2" width="18" height="18" fill="#f4f4f4" stroke="#777" stroke-width="1.500" />
      <rect x="14" y="16" width="9" height="8" rx="2" fill="#f04545" />
      <path d="M16 20h5" stroke="#fff" stroke-width="1.800" />
    </symbol>
    <symbol id="merge" viewBox="0 0 24 24">
      <path d="M2 10h12v12H2z" fill="#eee" stroke="#777" stroke-width="1.300" />
      <path d="M6 6h12v12H6z" fill="#eee" stroke="#777" stroke-width="1.300" />
      <path d="M11 1h12v12H11z" fill="#eee" stroke="#777" stroke-width="1.300" />
    </symbol>
    <symbol id="split" viewBox="0 0 24 24">
      <path d="M1 2h9v20H1zM14 2h8v20h-8z" fill="#eee" stroke="#888" stroke-width="1.300" />
      <path d="M12 0v24" stroke="#111" stroke-width="1.300" stroke-dasharray="2 1" />
    </symbol>
  </svg>

  <header class="title-bar">
    <svg class="logo" viewBox="0 0 24 24">
      <circle cx="11" cy="11.500" r="8.500" fill="none" stroke="#6da32f" stroke-width="5" />
      <path d="M11 11l4-1 8 9v5h-5z" fill="#589632" />
      <path d="M10 10l4 0 5 6-3 2-5-4z" fill="#ee7913" />
    </svg>
    <h1>제목 없는 프로젝트 — QGIS</h1>
    <div class="window-controls">
      <button aria-label="최소화"><svg viewBox="0 0 16 16"><path d="M0 8.500h15" /></svg></button>
      <button aria-label="이전 크기로"><svg viewBox="0 0 16 16"><rect x="1" y="4" width="11" height="11" rx="2" /><path d="M4 1h8q3 0 3 3v8" /></svg></button>
      <button aria-label="닫기"><svg viewBox="0 0 16 16"><path d="M1 1l14 14M15 1L1 15" /></svg></button>
    </div>
  </header>

  <nav class="menu-bar">
    <button>프로젝트 (<u>J</u>)</button>
    <button>편집 (<u>E</u>)</button>
    <button>보기 (<u>V</u>)</button>
    <button>레이어 (<u>L</u>)</button>
    <button>설정 (<u>S</u>)</button>
    <button>플러그인 (<u>P</u>)</button>
    <div class="menu-open">
      <button class="active">벡터 (<u>O</u>)</button>
      <div class="menu">
        <button>지리 정보 처리 도구 (<u>G</u>)</button>
        <button>도형 도구 (<u>G</u>)</button>
        <button>분석 도구 (<u>A</u>)</button>
        <button>조사 도구 (<u>R</u>)</button>
        <button class="active">데이터 관리 도구 (<u>D</u>)</button>
        <div class="submenu">
          <button><svg><use href="#gear" /></svg>공간 인덱스 생성...</button>
          <button><svg><use href="#gear" /></svg>위치에 따라 속성 결합...</button>
          <button><svg><use href="#merge" /></svg>벡터 레이어 병합...</button>
          <button><svg><use href="#gear" /></svg>레이어 재투영...</button>
          <button><svg><use href="#split" /></svg>벡터 레이어 분할...</button>
        </div>
      </div>
    </div>
    <button>래스터 (<u>R</u>)</button>
    <button>데이터베이스 (<u>D</u>)</button>
    <button>웹 (<u>W</u>)</button>
    <button>메시 (<u>M</u>)</button>
    <button>공간 처리 (<u>C</u>)</button>
    <button>도움말 (<u>H</u>)</button>
  </nav>

  <div class="toolbar-row">
    <div class="toolbar">
      <button aria-label="새 프로젝트"><svg><use href="#page" /></svg></button>
      <button aria-label="열기"><svg><use href="#folder" /></svg></button>
      <button aria-label="저장"><svg><use href="#save" /></svg></button>
      <button aria-label="새 조판"><svg><use href="#layout" /></svg></button>
      <button aria-label="조판 관리자"><svg><use href="#layouts" /></svg></button>
      <button aria-label="스타일 관리자"><svg><use href="#styles" /></svg></button>
    </div>
    <div class="toolbar">
      <button class="pressed" aria-label="맵 이동"><svg><use href="#hand" /></svg></button>
      <button disabled aria-label="선택 위치로 이동"><svg><use href="#pansel" /></svg></button>
      <button aria-label="확대"><svg><use href="#zoomin" /></svg></button>
      <button aria-label="축소"><svg><use href="#zoomout" /></svg></button>
      <button aria-label="전체 보기"><svg><use href="#zoomfull" /></svg></button>
      <button disabled aria-label="선택 영역 보기"><svg><use href="#zoomsel" /></svg></button>
      <span class="covered"></span>
      <button aria-label="새 3D 맵"><svg><use href="#view3d" /></svg></button>
      <button aria-label="새 북마크"><svg><use href="#bookmarknew" /></svg></button>
      <button aria-label="북마크 보기"><svg><use href="#bookmarks" /></svg></button>
      <button aria-label="시간 제어기"><svg><use href="#clock" /></svg></button>
      <button aria-label="새로고침"><svg><use href="#refresh" /></svg></button>
    </div>
    <div class="toolbar">
      <button disabled class="has-drop" aria-label="객체 선택"><svg><use href="#select" /></svg></button>
      <button disabled class="has-drop" aria-label="값으로 선택"><svg><use href="#selform" /></svg></button>
      <button class="has-drop" aria-label="선택 해제"><svg><use href="#deselect" /></svg></button>
      <button class="has-drop" aria-label="위치로 선택"><svg><use href="#selloc" /></svg></button>
    </div>
    <div class="toolbar">
      <button aria-label="객체 식별"><svg><use href="#identify" /></svg></button>
      <button disabled aria-label="필드 계산기"><svg><use href="#abacus" /></svg></button>
      <button aria-label="공간 처리 툴박스"><svg><use href="#gear" /></svg></button>
      <button aria-label="통계 요약"><svg><use href="#sigma" /></svg></button>
      <button disabled class="has-drop" aria-label="속성 테이블"><svg><use href="#attrs" /></svg></button>
      <button class="has-drop" aria-label="길이 측정"><svg><use href="#ruler" /></svg></button>
      <button aria-label="맵 도움말"><svg><use href="#tip" /></svg></button>
      <button disabled class="has-drop" aria-label="액션 실행"><svg><use href="#action" /></svg></button>
    </div>
  </div>

  <div class="toolbar-row">
    <div class="toolbar">
      <button aria-label="데이터 소스 관리자"><svg><use href="#datasource" /></svg></button>
      <button aria-label="새 GeoPackage"><svg><use href="#geopackage" /></svg></button>
      <button aria-label="새 Shapefile"><svg><use href="#newshape" /></svg></button>
      <button aria-label="새 SpatiaLite"><svg><use href="#newspatialite" /></svg></button>
      <button aria-label="새 임시 레이어"><svg><use href="#newmem" /></svg></button>
      <button aria-label="새 메시"><svg><use href="#newmesh" /></svg></button>
      <button aria-label="새 GPX"><svg><use href="#newgpx" /></svg></button>
    </div>
    <div class="toolbar">
      <button disabled aria-label="현재 편집"><svg><use href="#edits" /></svg></button>
      <button disabled aria-label="편집 모드"><svg><use href="#pencil" /></svg></button>
      <button disabled aria-label="편집 저장"><svg><use href="#saveedits" /></svg></button>
      <button disabled class="has-drop" aria-label="폴리곤 추가"><svg><use href="#polygon" /></svg></button>
      <span class="covered wide"></span>
      <button disabled aria-label="붙여넣기"><svg><use href="#paste" /></svg></button>
      <button disabled aria-label="실행 취소"><svg><use href="#undo" /></svg></button>
      <button disabled aria-label="다시 실행"><svg><use href="#redo" /></svg></button>
    </div>
    <div class="toolbar">
      <button disabled aria-label="라벨 옵션"><svg><use href="#tag" /></svg></button>
      <button disabled aria-label="다이어그램"><svg><use href="#diagram" /></svg></button>
      <span class="sep"></span>
      <button aria-label="고정 라벨"><svg><use href="#tagpin" /></svg></button>
      <button aria-label="미배치 라벨"><svg><use href="#tagred" /></svg></button>
      <span class="sep"></span>
      <button disabled aria-label="라벨 고정"><svg><use href="#tagpinoff" /></svg></button>
      <button disabled aria-label="라벨 표시"><svg><use href="#tageye" /></svg></button>
      <button disabled aria-label="라벨 이동"><svg><use href="#tagmove" /></svg></button>
      <button disabled aria-label="라벨 회전"><svg><use href="#tagrot" /></svg></button>
      <button disabled aria-label="라벨 변경"><svg><use href="#tagedit" /></svg></button>
    </div>
    <div class="toolbar">
      <button aria-label="웹 레이어 추가"><svg><use href="#globeadd" /></svg></button>
      <button aria-label="웹 레이어 찾기"><svg><use href="#globefind" /></svg></button>
      <button aria-label="MetaSearch"><svg><use href="#metasearch" /></svg></button>
    </div>
    <div class="toolbar">
      <button aria-label="파이썬 콘솔"><svg><use href="#python" /></svg></button>
    </div>
    <div class="toolbar">
      <button aria-label="도움말"><svg><use href="#help" /></svg></button>
    </div>
    <div class="toolbar"></div>
  </div>

  <div class="toolbar-row">
    <div class="toolbar">
      <button aria-label="좌표 복사"><svg><use href="#copyfeat" /></svg></button>
      <button aria-label="맵 핀"><svg><use href="#pinmap" /></svg></button>
      <button aria-label="좌표로 확대"><svg><use href="#lensdot" /></svg></button>
      <button aria-label="다중 확대"><svg><use href="#lensdots" /></svg></button>
      <button class="has-drop" aria-label="범위"><svg><use href="#extent" /></svg></button>
      <button aria-label="좌표계"><svg><use href="#crs" /></svg></button>
      <button disabled aria-label="XY 변환"><svg><use href="#xy" /></svg></button>
      <button aria-label="설정"><svg><use href="#wrench" /></svg></button>
    </div>
    <div class="toolbar">
      <button aria-label="클리퍼"><svg><use href="#clipper" /></svg></button>
      <button disabled aria-label="십자선"><svg><use href="#cross" /></svg></button>
      <span class="sep"></span>
      <button aria-label="대상"><svg><use href="#target" /></svg></button>
    </div>
  </div>

  <main>
    <div class="side-bar">
      <button aria-label="벡터 레이어 추가"><svg><use href="#addvec" /></svg></button>
      <button aria-label="래스터 레이어 추가"><svg><use href="#addraster" /></svg></button>
      <button aria-label="메시 레이어 추가"><svg><use href="#addmesh" /></svg></button>
      <button aria-label="구분자 텍스트 추가"><svg><use href="#addcsv" /></svg></button>
      <button aria-label="SpatiaLite 추가"><svg><use href="#addspatialite" /></svg></button>
      <button aria-label="벡터 타일 추가"><svg><use href="#addtile" /></svg></button>
      <button class="has-drop" aria-label="PostGIS 추가"><svg><use href="#addpg" /></svg></button>
      <button aria-label="WMS 추가"><svg><use href="#addwms" /></svg></button>
      <button aria-label="WCS 추가"><svg><use href="#addwcs" /></svg></button>
      <button aria-label="WFS 추가"><svg><use href="#addwfs" /></svg></button>
      <button class="has-drop" aria-label="새 가상 레이어"><svg><use href="#newshape" /></svg></button>
    </div>

    <section class="dock">
      <div class="dock-header">
        <h2>레이어</h2>
        <button aria-label="분리"><svg viewBox="0 0 17 17"><path d="M4 8h6v5H4zM7 8V4h6v6h-3" /></svg></button>
        <button aria-label="닫기"><svg viewBox="0 0 17 17"><path d="M4 4l9 9M13 4l-9 9" stroke-width="3" /></svg></button>
      </div>
      <div class="dock-tools">
        <button aria-label="레이어 스타일"><svg><use href="#brush" /></svg></button>
        <button aria-label="그룹 추가"><svg><use href="#addgroup" /></svg></button>
        <button aria-label="맵 테마"><svg><use href="#eye" /></svg></button>
        <button aria-label="범례 필터"><svg><use href="#filter" /></svg></button>
        <button disabled class="has-drop" aria-label="표현식 필터"><svg><use href="#expr" /></svg></button>
        <button aria-label="모두 펼치기"><svg><use href="#expand" /></svg></button>
        <button aria-label="모두 접기"><svg><use href="#collapse" /></svg></button>
        <button aria-label="제거"><svg><use href="#remove" /></svg></button>
      </div>
      <div class="layer-tree"></div>
      <div class="tabs">
        <button class="current">레이어</button>
        <button>탐색기</button>
      </div>
    </section>
    <div class="splitter"></div>
    <div class="canvas"></div>
  </main>

  <footer class="status-bar">
    <div class="search">
      <svg viewBox="0 0 20 20"><circle cx="8" cy="8" r="6" /><path d="M12 12l6 6" stroke-width="3" /></svg>
      <input type="text" aria-label="위치 찾기" placeholder="위치를 찾으려면 입력하세요 (Ctrl+K)" />
    </div>
    <span class="ready">준비</span>

    <label for="coord">좌표</label>
    <input type="text" id="coord" class="field" value="1.000, -1.022" />
    <svg class="mouse" viewBox="0 0 24 24">
      <path d="M2 4l7-3 11 13q2 5-2 8-5 2-9-2L3 10z" fill="#fff" stroke="#000" stroke-width="2" />
      <path d="M4 5l6 8M9 2l2 10M6 14l10-3M1 18l7-6" stroke="#000" stroke-width="2.500" />
      <circle cx="14" cy="18" r="3" fill="#fff" stroke="#000" stroke-width="2" />
      <path d="M17 8l6-6" stroke="#000" stroke-dasharray="2 2" />
    </svg>
    <label for="scale">축척</label>
    <div class="combo">
      <select id="scale">
        <option>1:10</option>
      </select>
    </div>
    <svg class="lock" viewBox="0 0 20 24">
      <path d="M5 12V7q0-5 5-5t5 5v5" fill="none" stroke="#999" stroke-width="3" />
      <rect x="1" y="11" width="18" height="13" rx="2" fill="#666" />
    </svg>
    <label for="magnifier">확대경</label>
    <div class="spin"><input type="text" id="magnifier" value="100%" /></div>
    <label for="rotation" class="rotation">회전</label>
    <div class="spin"><input type="text" id="rotation" value="0.0 °" /></div>
    <input type="checkbox" id="render" checked />
    <label for="render">렌더링</label>
    <button class="epsg"><svg><use href="#crs" /></svg>EPSG:5186</button>
    <button class="messages" aria-label="메시지">
      <svg viewBox="0 0 24 24">
        <path d="M12 1c7 0 12 4 12 10 0 4-2 6-4 8l2 5-8-4C5 21 0 17 0 11S5 1 12 1z" fill="#666" />
        <path d="M5 9h3v3H5zM10.500 9h3v3h-3zM16 9h3v3h-3z" fill="#fff" />
      </svg>
    </button>
  </footer>

  <div class="tray">
    <button aria-label="Google Drive"><svg viewBox="0 0 24 24">
      <rect width="24" height="24" rx="2" fill="#fff" />
      <path d="M9 3h6l-6 10-3 6-4-6z" fill="#5aa864" /><path d="M9 3h6l6 11h-6z" fill="#fcc934" /><path d="M9 13h12l-3 7H6z" fill="#4285f4" /><path d="M15 14h6l-3 6z" fill="#ea5a4a" /><path d="M12 8l3 6H9z" fill="#fff" />
    </svg></button>
    <button aria-label="보안"><svg viewBox="0 0 24 24">
      <rect width="24" height="24" rx="2" fill="#efefef" />
      <path d="M12 2q4 3 9 3 0 11-9 17Q3 16 3 5q5 0 9-3z" fill="#fff" stroke="#45bdea" stroke-width="2" /><path d="M12 8v6" stroke="#2aa5dc" stroke-width="3" />
    </svg></button>
    <button aria-label="카카오톡"><svg viewBox="0 0 24 24">
      <rect width="24" height="24" rx="3" fill="#fae100" />
      <path d="M12 4c5 0 9 3 9 7.500S17 19 12 19l-5 2 1-3c-3-1-5-3-5-6.500C3 7 7 4 12 4z" fill="#3b1e1e" />
    </svg></button>
    <button aria-label="Moises"><svg viewBox="0 0 24 24">
      <path d="M3 3v18M21 3v18" stroke="#000" stroke-width="6" stroke-linecap="round" /><path d="M12 7v5" stroke="#000" stroke-width="6" stroke-linecap="round" />
    </svg></button>
    <button aria-label="OneNote"><svg viewBox="0 0 24 24">
      <path d="M6 1h18v22H6z" fill="#ca64ea" /><path d="M18 6h6v6h-6z" fill="#ae4bd5" /><path d="M18 12h6v5h-6z" fill="#9332bf" /><path d="M18 17h6v6h-6z" fill="#7719aa" />
      <rect y="5" width="14" height="14" fill="#7719aa" /><text x="3" y="16" class="glyph-n">N</text>
    </svg></button>
    <button aria-label="창"><svg viewBox="0 0 24 24">
      <path d="M1 17V2h15v3M6 6h15v16H6z" fill="none" stroke="#fff" stroke-width="2" />
    </svg></button>
    <button aria-label="Bluetooth"><svg viewBox="0 0 24 24">
      <rect x="3" width="18" height="24" rx="8" fill="#0a84ff" />
      <path d="M8 8l8 8-4 4V4l4 4-8 8" fill="none" stroke="#fff" stroke-width="1.700" />
    </svg></button>
    <button aria-label="플레이어"><svg viewBox="0 0 24 24">
      <rect width="24" height="24" fill="#1e1e1e" />
      <path d="M5 2v20l6-4zM7 2l14 11-8 3z" fill="#76b900" /><path d="M7 5l12 9M7 9l7 7" stroke="#1e1e1e" stroke-width="1.500" />
    </svg></button>
    <button aria-label="Windows 보안"><svg viewBox="0 0 24 24">
      <path d="M12 0q5 3 11 3 0 14-11 20Q1 17 1 3q6 0 11-3z" fill="#0f6fc5" /><path d="M12 0q5 3 11 3v8H1V3q6 0 11-3z" fill="#35b8f1" /><path d="M12 0q5 3 11 3 0 6-2 9h-9z" fill="#1590df" />
      <path d="M17 9l7 15H10z" fill="#fdc116" /><path d="M17 14v5M17 20.500v2" stroke="#222" stroke-width="1.700" />
    </svg></button>
    <button aria-label="원격"><svg viewBox="0 0 24 24">
      <rect width="24" height="24" rx="4" fill="#29b496" />
      <path d="M12 17H6q-2 0-2-2V8q0-2 2-2h12q2 0 2 2v3" fill="none" stroke="#fff" stroke-width="2" /><circle cx="16" cy="15" r="4.500" fill="#fff" /><path d="M13 14l2 2 2-2 2 2" fill="none" stroke="#29b496" />
    </svg></button>
    <button aria-label="USB"><svg viewBox="0 0 24 24">
      <path d="M7 7V1h9v6M5 7h12v16H5z" fill="#fff" stroke="#111" stroke-width="1.300" /><path d="M9 4h1M13 4h1M15 20l3 3 6-6" fill="none" stroke="#333" stroke-width="1.300" />
    </svg></button>
    <button aria-label="Chrome"><svg viewBox="0 0 24 24">
      <circle cx="12" cy="12" r="12" fill="#fbc116" /><path d="M2 5.500A12 12 0 0 1 22.500 6.500H12L7 15z" fill="#e33b2e" /><path d="M2 5.500A12 12 0 0 0 11.500 24L17 14.500 7 15z" fill="#26994b" />
      <circle cx="12" cy="12" r="5.600" fill="#fff" /><circle cx="12" cy="12" r="4.300" fill="#2a7bef" />
    </svg></button>
    <button aria-label="휴대폰과 연결"><svg viewBox="0 0 24 24">
      <path d="M2 1h21v16H2z" fill="#1478cc" /><path d="M0 16h24v2H0z" fill="#0d5aa5" /><path d="M4 4h12v14H4z" fill="#2cb0ee" /><path d="M5 18h10v5H5z" fill="#0a4f98" /><path d="M8 5h4" stroke="#fff" />
    </svg></button>
  </div>

</body>

</html>
```

FILE: styles.css
```css
* {
  box-sizing: border-box;
}

body {
  display: flex;
  flex-direction: column;
  height: 100vh;
  margin: 0;
  overflow: hidden;
  border: 1px solid #000;
  background: #f0f0f0;
  color: #000;
  font-family: "Noto Sans CJK KR", sans-serif;
  font-size: 19px;
  font-weight: 300;
  line-height: 24px;
}

button,
input,
select {
  margin: 0;
  padding: 0;
  border: none;
  background: none;
  color: inherit;
  font: inherit;
}

h1,
h2 {
  margin: 0;
  font-size: 19px;
  font-weight: 300;
}

svg {
  display: block;
  flex: none;
}

.gradients {
  position: absolute;
  width: 0;
  height: 0;
}

.icon-defs {
  display: none;
}

/* letters inside icons */
.glyph-a {
  font: 20px "Noto Sans", sans-serif;
  fill: #333;
}

.glyph-i {
  font: italic bold 22px "Liberation Serif", serif;
  fill: #fff;
}

.glyph-sigma {
  font: bold 44px "Liberation Serif", serif;
  fill: #b000b0;
  stroke: #3d003d;
  text-anchor: middle;
}

.glyph-tag {
  font: 14px "Liberation Sans", sans-serif;
  fill: #333;
}

.glyph-tag.red {
  fill: #e02020;
}

.glyph-help {
  font: 26px "Liberation Serif", serif;
  fill: #fff;
  text-anchor: middle;
}

.glyph-xy {
  font: bold 17px "Noto Sans", sans-serif;
  fill: #888;
}

.glyph-eps {
  font: 26px "Liberation Serif", serif;
  fill: #555;
}

.glyph-n {
  font: bold 12px "Noto Sans", sans-serif;
  fill: #fff;
}

.mono {
  filter: grayscale(1);
}

/* title */
.title-bar {
  display: flex;
  align-items: center;
  height: 33px;
  padding: 0 0 2px 1px;
  background: #f3f3f3;
}

.logo {
  width: 24px;
  height: 24px;
  margin-right: 6px;
}

.window-controls {
  display: flex;
  margin-left: auto;
}

.window-controls button {
  width: 70px;
  height: 31px;
}

.window-controls svg {
  width: 16px;
  height: 16px;
  margin: 0 auto;
  fill: none;
  stroke: #111;
  stroke-width: 1.5;
}

/* menus */
.menu-bar {
  display: flex;
  gap: 8px;
  height: 31px;
  padding-left: 8px;
  border-bottom: 2px solid #d7d7d7;
}

.menu-bar button {
  height: 30px;
  padding: 0 7px;
  line-height: 26px;
  white-space: nowrap;
}

.menu-bar button.active {
  background: #0078d7;
  color: #fff;
}

.menu-open {
  position: relative;
  margin-right: 2px;
}

.menu,
.submenu {
  position: absolute;
  z-index: 5;
  display: flex;
  flex-direction: column;
  border: 2px solid #999;
  background: #fff;
  box-shadow: 3px 3px 3px rgba(0, 0, 0, 0.5);
}

.menu {
  top: 31px;
  left: 0;
  width: 303px;
}

.submenu {
  top: 142px;
  left: 300px;
  width: 341px;
  height: 181px;
}

.menu-bar .menu button {
  display: flex;
  flex: none;
  align-items: center;
  height: 36px;
  padding: 0 8px 0 41px;
  text-align: left;
  white-space: pre;
}

.menu > button::after {
  content: "";
  margin-left: auto;
  border: 6px solid transparent;
  border-right: none;
  border-left-color: #444;
}

.menu-bar .menu > button.active {
  height: 38px;
  margin: -2px;
  padding-right: 10px;
  padding-left: 43px;
  outline: 2px solid #3aa0f2;
  outline-offset: -2px;
}

.menu > button.active::after {
  border-left-color: #9cc9ee;
}

.menu-bar .submenu button {
  gap: 9px;
  padding-left: 10px;
}

.submenu button svg {
  width: 22px;
  height: 22px;
}

/* toolbars */
.toolbar-row {
  display: flex;
  height: 58px;
  border-bottom: 1px solid #b4b4b4;
  background: linear-gradient(#fafafa, #eee);
}

.toolbar {
  display: flex;
  align-items: center;
  gap: 2px;
  margin-right: 5px;
  padding-left: 7px;
}

.toolbar::before {
  content: "";
  width: 6px;
  height: 24px;
  margin-right: 4px;
  background: radial-gradient(circle at 1px 1px, #b0b0b0 1px, transparent 1px) 0 0 / 4px 4px;
}

.toolbar button {
  display: flex;
  align-items: center;
  height: 46px;
  padding: 0 6px;
  border-radius: 3px;
}

.toolbar svg,
.side-bar svg {
  width: 36px;
  height: 36px;
}

.toolbar .pressed {
  padding: 0 5px;
  border: 1px solid #aaa;
  background: #dcdcdc;
}

button:disabled svg {
  opacity: 0.36;
  filter: grayscale(0.6);
}

.has-drop::after {
  content: "";
  border: 5px solid transparent;
  border-top: 6px solid #555;
  border-bottom: none;
}

.toolbar .has-drop::after,
.side-bar .has-drop::after {
  margin-left: 10px;
}

.toolbar .has-drop {
  padding-right: 4px;
}

.has-drop:disabled::after {
  border-top-color: #a5a5a5;
}

.sep {
  width: 1px;
  height: 28px;
  margin: 0 4px;
  background: #c4c4c4;
}

/* stretch of the toolbar that lies under the open menu */
.covered {
  width: 240px;
}

.covered.wide {
  width: 308px;
}

/* body */
main {
  display: flex;
  flex: 1;
  min-height: 0;
  padding-top: 2px;
}

.side-bar {
  width: 76px;
  padding: 7px 0 0 5px;
  border-right: 1px solid #b4b4b4;
  background: linear-gradient(to right, #fafafa, #eee);
}

.side-bar::before {
  content: "";
  display: block;
  width: 24px;
  height: 6px;
  margin: 0 0 5px 23px;
  background: radial-gradient(circle at 1px 1px, #b0b0b0 1px, transparent 1px) 0 0 / 4px 4px;
}

.side-bar button {
  display: flex;
  align-items: center;
  height: 48px;
  padding: 0 6px;
}

.dock {
  display: flex;
  flex-direction: column;
  width: 510px;
  padding-left: 2px;
}

.dock-header {
  display: flex;
  align-items: center;
  gap: 4px;
  height: 28px;
  padding: 0 2px 0 6px;
}

.dock-header h2 {
  flex: 1;
}

.dock-header button {
  width: 17px;
  height: 17px;
  border: 1px solid #777;
  border-radius: 3px;
}

.dock-header svg {
  width: 15px;
  height: 15px;
  fill: none;
  stroke: #666;
  stroke-width: 1.5;
}

.dock-tools {
  display: flex;
  align-items: center;
  gap: 13px;
  height: 46px;
  margin-bottom: 1px;
  padding-left: 12px;
}

.dock-tools svg {
  width: 24px;
  height: 24px;
}

.dock-tools .has-drop {
  display: flex;
  align-items: center;
  gap: 10px;
}

.layer-tree {
  flex: 1;
  border: 1px solid #b4b4b4;
  border-right: none;
  background: #fff;
}

.tabs {
  display: flex;
  align-items: flex-start;
  height: 36px;
  margin-top: 1px;
  border-top: 2px solid #b4b4b4;
}

.tabs button {
  width: 90px;
  height: 30px;
  border: 1px solid #b4b4b4;
  border-top: none;
  border-radius: 0 0 4px 4px;
  background: #dedede;
  line-height: 26px;
}

.tabs .current {
  height: 33px;
  background: #f8f8f8;
  line-height: 31px;
}

.splitter {
  width: 10px;
}

.canvas {
  flex: 1;
  border: 1px solid #b4b4b4;
  border-right: none;
  background: #fff;
}

/* status bar */
.status-bar {
  display: flex;
  align-items: center;
  height: 42px;
  padding: 0 8px 0 5px;
  font-size: 17px;
  white-space: nowrap;
}

.search,
.field,
.combo,
.spin {
  height: 34px;
  border: 2px solid #b4b4b4;
  border-radius: 4px;
  background: #fff;
}

.search {
  display: flex;
  align-items: center;
  gap: 9px;
  width: 535px;
  padding-left: 13px;
}

.search svg {
  width: 20px;
  height: 20px;
  fill: none;
  stroke: #8a8a8a;
  stroke-width: 1.7;
}

.search input {
  flex: 1;
  height: 30px;
  font-size: 19px;
}

.search input::placeholder {
  color: #808080;
}

.ready {
  margin: 0 auto 0 13px;
}

.field {
  width: 133px;
  margin: 0 5px;
  padding-left: 8px;
  font-size: 19px;
}

.mouse {
  width: 24px;
  height: 26px;
  margin-right: 19px;
}

.combo,
.spin {
  display: flex;
  position: relative;
  width: 133px;
  margin-left: 7px;
  font-size: 19px;
}

.combo select,
.spin input {
  width: 100%;
  padding-left: 5px;
  appearance: none;
}

.combo::after,
.spin::after {
  content: "";
  position: absolute;
  top: 12px;
  right: 11px;
  border: 6px solid transparent;
  border-top: 7px solid #555;
  border-bottom: none;
}

.combo::before,
.spin::before {
  content: "";
  position: absolute;
  top: 0;
  right: 0;
  width: 30px;
  height: 30px;
  border-left: 1px solid #ccc;
  background: #f5f5f5;
}

.spin::before {
  width: 22px;
}

.spin::after {
  top: 19px;
  right: 5px;
}

.lock {
  width: 20px;
  height: 24px;
  margin: 0 12px 0 17px;
}

.rotation {
  margin: 0 7px 0 17px;
}

.spin + input {
  appearance: none;
  width: 20px;
  height: 20px;
  margin: 0 9px;
  border: 1px solid #999;
  background: #fff;
}

.spin + input:checked::before {
  content: "✔";
  display: block;
  font: bold 18px/20px "DejaVu Sans", sans-serif;
  text-align: center;
}

.epsg {
  display: flex;
  align-items: center;
  gap: 3px;
  margin-left: 25px;
}

.epsg svg {
  width: 24px;
  height: 24px;
}

.messages {
  margin-left: 43px;
}

.messages svg {
  width: 24px;
  height: 24px;
}

/* tray flyout */
.tray {
  position: absolute;
  right: 267px;
  bottom: 20px;
  z-index: 10;
  display: grid;
  grid-template-columns: repeat(5, 60px);
  grid-auto-rows: 60px;
  padding: 5px 4px 4px;
  border: 2px solid #e9e9e9;
  border-radius: 12px;
  background: #f9f9f9;
  box-shadow: 0 6px 16px rgba(0, 0, 0, 0.2);
}

.tray svg {
  width: 24px;
  height: 24px;
  margin: 0 auto;
}
```
